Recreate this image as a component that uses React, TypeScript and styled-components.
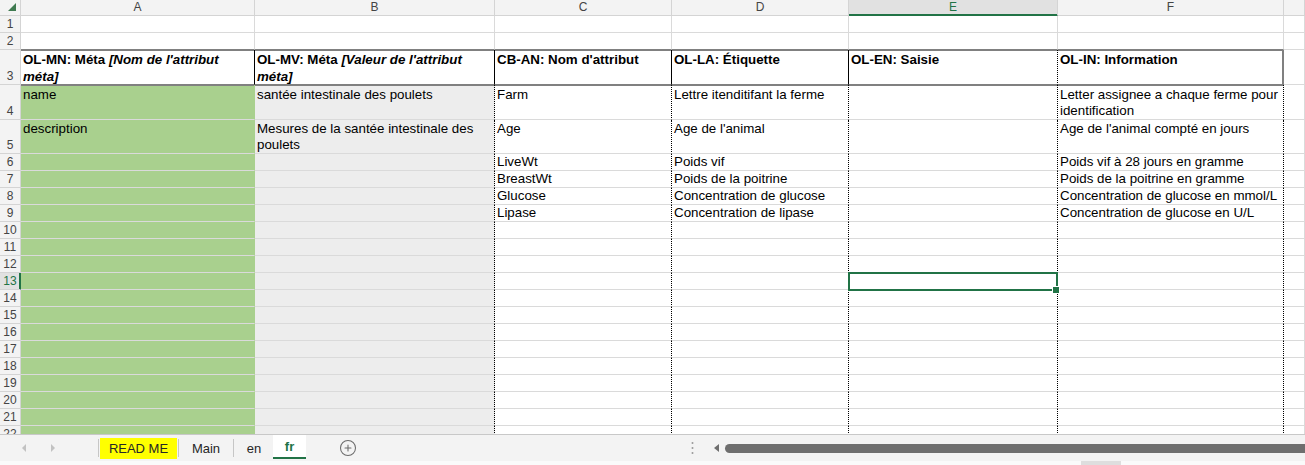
import React from 'react';
import styled, { createGlobalStyle } from 'styled-components';
import { CirclePlus } from 'lucide-react';

const C = {
  grid: '#dadada',
  head: '#f3f3f3',
  headLine: '#d4d4d4',
  headSel: '#e1e1e1',
  green: '#a9d08e',
  gray: '#ededed',
  range: '#808080',
  sel: '#217346',
};

const COLS = '21px 234px 240px 177px 177px 209px 226px 1fr';

type Edge = 'grid' | 'dotted' | 'solid' | 'range' | 'fill';

const edge = (e: Edge, fill: string) => {
  switch (e) {
    case 'dotted':
      return '1px dotted #000';
    case 'solid':
      return '1px solid #000';
    case 'range':
      return `1px solid ${C.range}`;
    case 'fill':
      return `1px solid ${fill}`;
    default:
      return `1px solid ${C.grid}`;
  }
};

const GlobalStyle = createGlobalStyle`
  html, body { margin: 0; padding: 0; background: #fff; }
  body { font-family: "Liberation Sans", Arial, sans-serif; overflow: hidden; }
`;

const Page = styled.div`
  width: 1305px;
  height: 465px;
  display: flex;
  flex-direction: column;
  overflow: hidden;
`;

const Sheet = styled.div`
  flex: none;
  height: 434px;
  overflow: hidden;
`;

const Row = styled.div<{ $h: number }>`
  display: grid;
  grid-template-columns: ${COLS};
  height: ${(p) => p.$h}px;
`;

const Corner = styled.div`
  display: flex;
  align-items: flex-end;
  justify-content: flex-end;
  padding: 0 3px 3px 0;
  background: ${C.head};
  border-right: 1px solid ${C.headLine};
  border-bottom: 1px solid ${C.headLine};
`;

const ColHead = styled.div<{ $sel?: boolean }>`
  display: flex;
  align-items: center;
  justify-content: center;
  background: ${(p) => (p.$sel ? C.headSel : C.head)};
  border-right: 1px solid ${C.headLine};
  border-bottom: 1px solid ${(p) => (p.$sel ? C.sel : C.headLine)};
  box-shadow: ${(p) => (p.$sel ? `inset 0 -1px 0 ${C.sel}` : 'none')};
  color: ${(p) => (p.$sel ? C.sel : '#444')};
  font-size: 12px;
  line-height: 15px;
`;

const RowHead = styled.div<{ $sel?: boolean }>`
  display: flex;
  align-items: flex-end;
  justify-content: center;
  background: ${(p) => (p.$sel ? C.headSel : C.head)};
  border-right: 1px solid ${(p) => (p.$sel ? C.sel : C.headLine)};
  border-bottom: 1px solid ${C.headLine};
  box-shadow: ${(p) => (p.$sel ? `inset -1px 0 0 ${C.sel}` : 'none')};
  color: ${(p) => (p.$sel ? C.sel : '#444')};
  font-size: 12px;
  line-height: 16px;
  overflow: hidden;
`;

type CellProps = {
  $fill: string;
  $right: Edge;
  $bottom: Edge;
  $rangeTop?: boolean;
  $rangeRight?: boolean;
  $wrap?: boolean;
  $bold?: boolean;
  $pad: number;
  $lh: number;
  $sel?: boolean;
};

const shadows = (p: CellProps) => {
  const s: string[] = [];
  if (p.$rangeTop) s.push(`inset 0 1px 0 ${C.range}`);
  if (p.$rangeRight) s.push(`inset -1px 0 0 ${C.range}`);
  return s.length ? s.join(', ') : 'none';
};

const Cell = styled.div<CellProps>`
  position: ${(p) => (p.$sel ? 'relative' : 'static')};
  min-width: 0;
  padding: ${(p) => p.$pad}px 2px 0 2px;
  background: ${(p) => p.$fill};
  border-right: ${(p) => edge(p.$right, p.$fill)};
  border-bottom: ${(p) => edge(p.$bottom, p.$fill)};
  box-shadow: ${(p) => shadows(p)};
  font-size: 13.33px;
  line-height: ${(p) => p.$lh}px;
  font-weight: ${(p) => (p.$bold ? 700 : 400)};
  color: #000;
  white-space: ${(p) => (p.$wrap ? 'normal' : 'nowrap')};
  overflow: ${(p) => (p.$sel ? 'visible' : 'hidden')};
`;

const Selection = styled.div`
  position: absolute;
  left: -1px;
  top: -1px;
  right: -1px;
  bottom: -2px;
  border: 2px solid ${C.sel};
  pointer-events: none;
  z-index: 2;
`;

const Handle = styled.div`
  position: absolute;
  right: -4px;
  bottom: -5px;
  width: 6px;
  height: 6px;
  background: ${C.sel};
  border: 1px solid #fff;
`;

/* ---------- tab bar ---------- */

const TabBar = styled.div`
  flex: none;
  height: 31px;
  box-sizing: border-box;
  border-top: 1px solid #c8c8c8;
  background: #f3f3f3;
  display: flex;
  flex-direction: column;
`;

const TabRow = styled.div`
  height: 26px;
  display: flex;
  align-items: center;
`;

const TabsArea = styled.div`
  flex: none;
  width: 681px;
  height: 100%;
  display: flex;
  align-items: center;
`;

const SheetNav = styled.div`
  flex: none;
  width: 97px;
  box-sizing: border-box;
  padding-left: 22px;
  display: flex;
  align-items: center;
  gap: 25px;
`;

const NavArrow = styled.span<{ $dir: 'left' | 'right' }>`
  width: 0;
  height: 0;
  border-top: 4px solid transparent;
  border-bottom: 4px solid transparent;
  ${(p) =>
    p.$dir === 'left'
      ? 'border-right: 4px solid #c2c2c2;'
      : 'border-left: 4px solid #c2c2c2;'}
`;

const Sep = styled.span`
  flex: none;
  width: 1px;
  height: 18px;
  margin: 0 1px;
  background: #c6c6c6;
`;

const Tab = styled.div<{ $w: number; $bg?: string; $active?: boolean }>`
  flex: none;
  width: ${(p) => p.$w}px;
  height: ${(p) => (p.$active ? 24 : 21)}px;
  box-sizing: border-box;
  align-self: ${(p) => (p.$active ? 'flex-start' : 'center')};
  display: flex;
  align-items: center;
  justify-content: center;
  background: ${(p) => (p.$active ? '#fff' : p.$bg ?? 'transparent')};
  border-bottom: ${(p) => (p.$active ? `2px solid ${C.sel}` : 'none')};
  padding-top: ${(p) => (p.$active ? 1 : 0)}px;
  color: ${(p) => (p.$active ? C.sel : '#262626')};
  font-weight: ${(p) => (p.$active ? 700 : 400)};
  font-size: 13px;
  white-space: nowrap;
`;

const AddSheet = styled.span`
  display: flex;
  margin-left: 33px;
  color: #6b6b6b;
`;

const ScrollArea = styled.div`
  flex: 1;
  min-width: 0;
  height: 100%;
  display: flex;
  align-items: center;
  overflow: hidden;
`;

const Grip = styled.svg`
  flex: none;
  margin-left: 10px;
`;

const ScrollLeft = styled.span`
  flex: none;
  margin-left: 20px;
  width: 0;
  height: 0;
  border-top: 4px solid transparent;
  border-bottom: 4px solid transparent;
  border-right: 5px solid #6e6e6e;
`;

const Thumb = styled.div`
  flex: 1;
  height: 9px;
  margin: 1px -12px 0 6px;
  border-radius: 5px;
  background: #6e6e6e;
`;

const StatusStrip = styled.div`
  height: 4px;
  background: #fafafa;
  display: flex;
`;

const StripBox = styled.div`
  margin-left: 1081px;
  width: 40px;
  background: #dedede;
`;

/* ---------- data ---------- */

type CellSpec = {
  text?: React.ReactNode;
  fill?: string;
  right?: Edge;
  bottom?: Edge;
  rangeTop?: boolean;
  rangeRight?: boolean;
  wrap?: boolean;
  bold?: boolean;
  sel?: boolean;
};

type RowSpec = { n: number; h: number; pad: number; lh: number; cells: CellSpec[] };

const headerTexts: React.ReactNode[] = [
  <>
    OL-MN: Méta <i>[Nom de l'attribut méta]</i>
  </>,
  <>
    OL-MV: Méta <i>[Valeur de l'attribut méta]</i>
  </>,
  "CB-AN: Nom d'attribut",
  'OL-LA: Étiquette',
  'OL-EN: Saisie',
  'OL-IN: Information',
];

const headerRights: Edge[] = ['solid', 'solid', 'solid', 'solid', 'dotted', 'range'];

const body: Record<number, (string | undefined)[]> = {
  4: ['name', 'santée intestinale des poulets', 'Farm', 'Lettre itenditifant la ferme', undefined, 'Letter assignee a chaque ferme pour identification'],
  5: ['description', 'Mesures de la santée intestinale des poulets', 'Age', "Age de l'animal", undefined, "Age de l'animal compté en jours"],
  6: [undefined, undefined, 'LiveWt', 'Poids vif', undefined, 'Poids vif à 28 jours en gramme'],
  7: [undefined, undefined, 'BreastWt', 'Poids de la poitrine', undefined, 'Poids de la poitrine en gramme'],
  8: [undefined, undefined, 'Glucose', 'Concentration de glucose', undefined, 'Concentration de glucose en mmol/L'],
  9: [undefined, undefined, 'Lipase', 'Concentration de lipase', undefined, 'Concentration de glucose en U/L'],
};

const heights: Record<number, number> = { 1: 17, 2: 17, 3: 35, 4: 35, 5: 34 };

const SEL_ROW = 13;

const buildRows = (): RowSpec[] => {
  const rows: RowSpec[] = [];
  for (let n = 1; n <= 22; n++) {
    const h = heights[n] ?? 17;
    const cells: CellSpec[] = [];
    if (n <= 2) {
      for (let c = 0; c < 7; c++) cells.push({ bottom: n === 2 && c < 6 ? 'range' : 'grid' });
      rows.push({ n, h, pad: 0, lh: 16, cells });
      continue;
    }
    if (n === 3) {
      headerTexts.forEach((t, i) =>
        cells.push({
          text: t,
          bold: true,
          wrap: true,
          rangeTop: true,
          rangeRight: i === 5,
          right: headerRights[i],
          bottom: 'range',
        })
      );
      cells.push({});
      rows.push({ n, h, pad: 1, lh: 17, cells });
      continue;
    }
    const data = body[n] ?? [];
    const tall = n <= 5;
    for (let c = 0; c < 6; c++) {
      cells.push({
        text: data[c],
        fill: c === 0 ? C.green : c === 1 ? C.gray : undefined,
        right: c === 0 ? 'fill' : 'dotted',
        bottom: 'grid',
        rangeTop: n === 4,
        wrap: tall,
        sel: n === SEL_ROW && c === 4,
      });
    }
    cells.push({});
    rows.push({ n, h, pad: n === 4 ? 2 : tall ? 1 : 0, lh: 16, cells });
  }
  return rows;
};

const rows = buildRows();

const colLetters = ['A', 'B', 'C', 'D', 'E', 'F', ''];

const CornerMark = () => (
  <svg width="9" height="9" viewBox="0 0 9 9">
    <polygon points="8,0 8,8 0,8" fill="#3f7a50" />
  </svg>
);

export default function App() {
  return (
    <>
      <GlobalStyle />
      <Page>
        <Sheet>
          <Row $h={16}>
            <Corner>
              <CornerMark />
            </Corner>
            {colLetters.map((l, i) => (
              <ColHead key={i} $sel={l === 'E'}>
                {l}
              </ColHead>
            ))}
          </Row>
          {rows.map((r) => (
            <Row key={r.n} $h={r.h}>
              <RowHead $sel={r.n === SEL_ROW}>{r.n}</RowHead>
              {r.cells.map((c, i) => (
                <Cell
                  key={i}
                  $fill={c.fill ?? '#fff'}
                  $right={c.right ?? 'grid'}
                  $bottom={c.bottom ?? 'grid'}
                  $rangeTop={c.rangeTop}
                  $rangeRight={c.rangeRight}
                  $wrap={c.wrap}
                  $bold={c.bold}
                  $pad={r.pad}
                  $lh={r.lh}
                  $sel={c.sel}
                >
                  {c.text}
                  {c.sel && (
                    <Selection>
                      <Handle />
                    </Selection>
                  )}
                </Cell>
              ))}
            </Row>
          ))}
        </Sheet>
        <TabBar>
          <TabRow>
            <TabsArea>
              <SheetNav>
                <NavArrow $dir="left" />
                <NavArrow $dir="right" />
              </SheetNav>
              <Sep />
              <Tab $w={77} $bg="#ffff00">READ ME</Tab>
              <Sep />
              <Tab $w={52}>Main</Tab>
              <Sep />
              <Tab $w={38}>en</Tab>
              <Tab $w={33} $active>
                fr
              </Tab>
              <AddSheet>
                <CirclePlus size={18} strokeWidth={1.4} />
              </AddSheet>
            </TabsArea>
            <ScrollArea>
              <Grip width="3" height="14" viewBox="0 0 3 14">
                <circle cx="1.5" cy="2" r="1" fill="#9a9a9a" />
                <circle cx="1.5" cy="7" r="1" fill="#9a9a9a" />
                <circle cx="1.5" cy="12" r="1" fill="#9a9a9a" />
              </Grip>
              <ScrollLeft />
              <Thumb />
            </ScrollArea>
          </TabRow>
          <StatusStrip>
            <StripBox />
          </StatusStrip>
        </TabBar>
      </Page>
    </>
  );
}
